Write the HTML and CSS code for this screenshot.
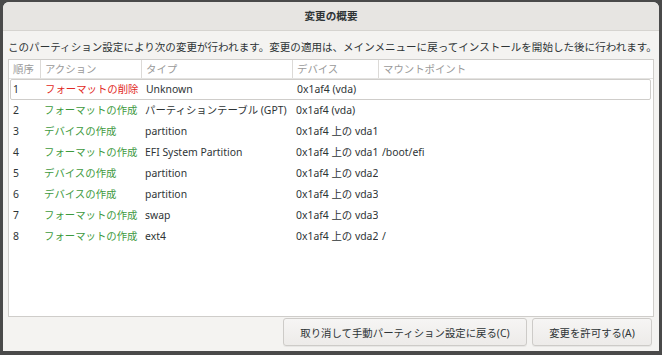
FILE: index.html
```html
<!DOCTYPE html>
<html lang="ja">
<head>
    <meta charset="UTF-8">
    <title>変更の概要</title>
    <link rel="stylesheet" href="styles.css">
</head>
<body>
<div class="dialog">
    <!-- title bar -->
    <div class="titlebar">変更の概要</div>

    <div class="message">このパーティション設定により次の変更が行われます。変更の適用は、メインメニューに戻ってインストールを開始した後に行われます。</div>

    <!-- list of changes -->
    <div class="changes">
        <div class="row head">
            <div class="cell">順序</div>
            <div class="cell">アクション</div>
            <div class="cell">タイプ</div>
            <div class="cell">デバイス</div>
            <div class="cell">マウントポイント</div>
        </div>
        <div class="row focused">
            <div class="cell">1</div>
            <div class="cell delete">フォーマットの削除</div>
            <div class="cell">Unknown</div>
            <div class="cell">0x1af4 (vda)</div>
            <div class="cell"></div>
        </div>
        <div class="row">
            <div class="cell">2</div>
            <div class="cell create">フォーマットの作成</div>
            <div class="cell">パーティションテーブル (GPT)</div>
            <div class="cell">0x1af4 (vda)</div>
            <div class="cell"></div>
        </div>
        <div class="row">
            <div class="cell">3</div>
            <div class="cell create">デバイスの作成</div>
            <div class="cell">partition</div>
            <div class="cell">0x1af4 上の vda1</div>
            <div class="cell"></div>
        </div>
        <div class="row">
            <div class="cell">4</div>
            <div class="cell create">フォーマットの作成</div>
            <div class="cell">EFI System Partition</div>
            <div class="cell">0x1af4 上の vda1</div>
            <div class="cell">/boot/efi</div>
        </div>
        <div class="row">
            <div class="cell">5</div>
            <div class="cell create">デバイスの作成</div>
            <div class="cell">partition</div>
            <div class="cell">0x1af4 上の vda2</div>
            <div class="cell"></div>
        </div>
        <div class="row">
            <div class="cell">6</div>
            <div class="cell create">デバイスの作成</div>
            <div class="cell">partition</div>
            <div class="cell">0x1af4 上の vda3</div>
            <div class="cell"></div>
        </div>
        <div class="row">
            <div class="cell">7</div>
            <div class="cell create">フォーマットの作成</div>
            <div class="cell">swap</div>
            <div class="cell">0x1af4 上の vda3</div>
            <div class="cell"></div>
        </div>
        <div class="row">
            <div class="cell">8</div>
            <div class="cell create">フォーマットの作成</div>
            <div class="cell">ext4</div>
            <div class="cell">0x1af4 上の vda2</div>
            <div class="cell">/</div>
        </div>
    </div>

    <!-- buttons -->
    <div class="actions">
        <button class="btn btn-cancel">取り消して手動パーティション設定に戻る(C)</button>
        <button class="btn btn-accept">変更を許可する(A)</button>
    </div>
</div>
</body>
</html>
```

FILE: styles.css
```css
/* --------------------
 Summary of changes dialog
 -------------------- */

:root {
    --outer-bg: #4a4a4a;
    --title-bg: #e7e5e2;
    --dialog-bg: #f4f3f1;
    --frame-border: #cfcdca;
    --text-color: #2e3436;
    --head-color: #9a9a9a;
    --delete-color: #e22a26;
    --create-color: #3e9a3e;
}

* {
    box-sizing: border-box;
    font-family: "Noto Sans", "Noto Sans CJK JP", sans-serif;
}

body {
    margin: 0;
    background-color: var(--outer-bg);
}

.dialog {
    width: 656px;
    height: 349px;
    margin: 2px 3px 0 3px;
    background-color: var(--dialog-bg);
    border-radius: 6px 6px 0 0;
    overflow: hidden;
    color: var(--text-color);
    font-size: 10.4px;
}

.titlebar {
    height: 29px;
    line-height: 29px;
    text-align: center;
    font-weight: 600;
    font-size: 10.6px;
    background-color: var(--title-bg);
    border-bottom: 1px solid #d6d4d0;
}

.message {
    height: 14px;
    line-height: 14px;
    margin: 9px 0 5px 5px;
    font-size: 10.55px;
    white-space: nowrap;
}

.changes {
    width: 646px;
    height: 258px;
    margin-left: 5px;
    background-color: #fff;
    border: 1px solid var(--frame-border);
}

.row {
    display: grid;
    grid-template-columns: 31px 101px 151px 86px 1fr;
    height: 21px;
    line-height: 21px;
    margin-right: 2px;
}

.cell {
    padding-left: 4px;
    white-space: nowrap;
    overflow: hidden;
}

.head {
    height: 19px;
    line-height: 19px;
    color: var(--head-color);
    border-bottom: 1px solid #e4e3e1;
    margin-right: 0;
}

.head .cell + .cell {
    border-left: 1px solid #dcdad7;
    padding-left: 4px;
}

.focused {
    outline: 1px solid #cfcdca;
    outline-offset: -1px;
    border-radius: 2px;
    margin-left: 1px;
}

.focused .cell:first-child {
    padding-left: 3px;
}

.delete {
    color: var(--delete-color);
}

.create {
    color: var(--create-color);
}

.actions {
    display: flex;
    justify-content: flex-end;
    gap: 5px;
    margin: 1px 7px 0 0;
}

.btn {
    height: 28px;
    padding: 0;
    font-size: 10.4px;
    color: var(--text-color);
    background: linear-gradient(#f6f5f4, #edebe9);
    border: 1px solid #cdcbc8;
    border-radius: 3px;
    box-shadow: 0 1px 0 rgba(0, 0, 0, 0.05);
}

.btn-cancel {
    width: 244px;
}

.btn-accept {
    width: 120px;
}
```
